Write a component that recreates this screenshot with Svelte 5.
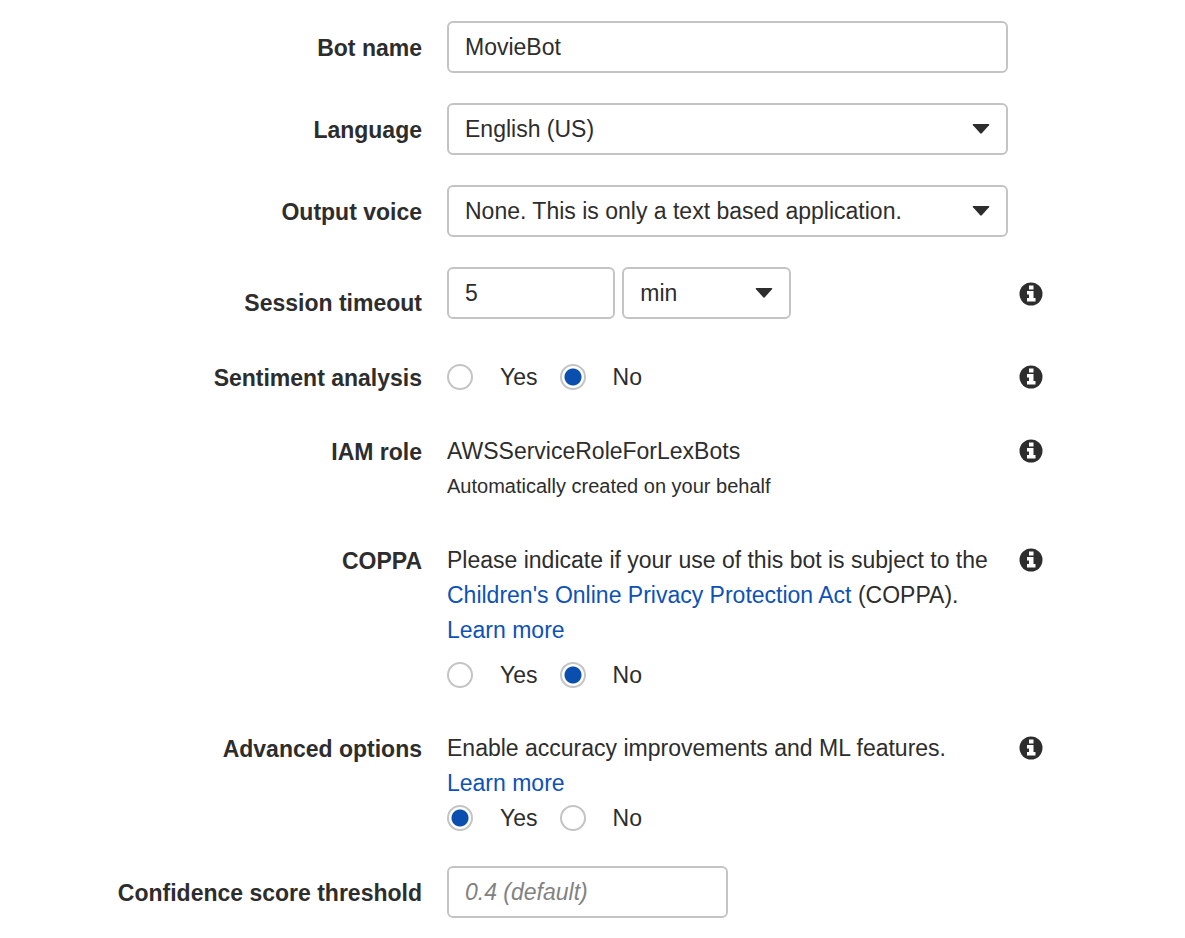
<script>
  let botName = $state('MovieBot')
  let language = $state('en-US')
  let voice = $state('none')
  let timeout = $state(5)
  let unit = $state('min')
  let sentiment = $state('No')
  let coppa = $state('No')
  let advanced = $state('Yes')
  let threshold = $state('')
</script>

{#snippet info(label)}
  <button type="button" class="info" aria-label={label}>
    <svg viewBox="0 0 24 24" width="24" height="24" aria-hidden="true">
      <circle cx="12" cy="12" r="11.5" fill="#2d2d2d" />
      <path d="M10 3.500h4.500v4H10zM8 9h6.500v7h2v3.500H8V16h2v-3.500H8z" fill="#fff" />
    </svg>
  </button>
{/snippet}

{#snippet caret()}
  <svg class="caret" viewBox="0 0 18 10" width="18" height="10" aria-hidden="true">
    <path d="M1.500 0h15q1.500 0 .5 1.200L9.800 9.300q-.8.700-1.600 0L1 1.200Q0 0 1.500 0z" fill="#2d2d2d" />
  </svg>
{/snippet}

<form onsubmit={e => e.preventDefault()}>
  <div class="row">
    <label class="name" for="bot-name">Bot name</label>
    <div class="field"><input id="bot-name" class="box" type="text" bind:value={botName} /></div>
  </div>

  <div class="row">
    <label class="name" for="language">Language</label>
    <div class="field select">
      <select id="language" class="box" bind:value={language}>
        <option value="en-US">English (US)</option>
      </select>
      {@render caret()}
    </div>
  </div>

  <div class="row">
    <label class="name" for="voice">Output voice</label>
    <div class="field select">
      <select id="voice" class="box" bind:value={voice}>
        <option value="none">None. This is only a text based application.</option>
      </select>
      {@render caret()}
    </div>
  </div>

  <div class="row session">
    <label class="name" for="timeout">Session timeout</label>
    <div class="field timeout">
      <input id="timeout" class="box" type="text" inputmode="numeric" bind:value={timeout} />
      <div class="select">
        <select class="box" aria-label="Session timeout unit" bind:value={unit}>
          <option value="min">min</option>
        </select>
        {@render caret()}
      </div>
    </div>
    {@render info('About session timeout')}
  </div>

  <div class="row text sentiment" role="radiogroup" aria-labelledby="sentiment-label">
    <span class="name" id="sentiment-label">Sentiment analysis</span>
    <div class="field choices">
      <label><input type="radio" name="sentiment" value="Yes" bind:group={sentiment} />Yes</label>
      <label><input type="radio" name="sentiment" value="No" bind:group={sentiment} />No</label>
    </div>
    {@render info('About sentiment analysis')}
  </div>

  <div class="row text role">
    <span class="name">IAM role</span>
    <div class="field">
      <div>AWSServiceRoleForLexBots</div>
      <div class="note">Automatically created on your behalf</div>
    </div>
    {@render info('About the IAM role')}
  </div>

  <div class="row text coppa" role="radiogroup" aria-labelledby="coppa-label">
    <span class="name" id="coppa-label">COPPA</span>
    <div class="field">
      <div>
        Please indicate if your use of this bot is subject to the
        <a href="#coppa">Children's Online Privacy Protection Act</a> (COPPA).
      </div>
      <a href="#learn-coppa">Learn more</a>
      <div class="choices">
        <label><input type="radio" name="coppa" value="Yes" bind:group={coppa} />Yes</label>
        <label><input type="radio" name="coppa" value="No" bind:group={coppa} />No</label>
      </div>
    </div>
    {@render info('About COPPA')}
  </div>

  <div class="row text" role="radiogroup" aria-labelledby="advanced-label">
    <span class="name" id="advanced-label">Advanced options</span>
    <div class="field">
      <div>Enable accuracy improvements and ML features.</div>
      <a href="#learn-advanced">Learn more</a>
      <div class="choices">
        <label><input type="radio" name="advanced" value="Yes" bind:group={advanced} />Yes</label>
        <label><input type="radio" name="advanced" value="No" bind:group={advanced} />No</label>
      </div>
    </div>
    {@render info('About advanced options')}
  </div>

  <div class="row">
    <label class="name" for="threshold">Confidence score threshold</label>
    <div class="field">
      <input id="threshold" class="box half" type="text" placeholder="0.4 (default)" bind:value={threshold} />
    </div>
  </div>
</form>

<style>
  :global(body) { background: #fff; }
  form {
    box-sizing: border-box; max-width: 1185px; padding: 21px 142px 0 100px;
    color: #2d2d2d; font: 23px/35px "Liberation Sans", Arial, sans-serif;
  }
  .row {
    display: grid; grid-template-columns: 322px minmax(0, 1fr) 24px;
    column-gap: 11px; margin-bottom: 30px;
  }
  .row:last-child { margin-bottom: 0; padding-bottom: 20px; }
  .name { padding-top: 10px; font-weight: 700; text-align: right; }
  .field { min-width: 0; margin-left: 14px; }
  .box {
    box-sizing: border-box; display: block; width: 100%; height: 52px; padding: 0 16px;
    border: 2px solid #c4c4c4; border-radius: 6px; background: #fff;
    color: #2d2d2d; font: inherit; appearance: none; outline: none;
  }
  .box:focus { border-color: #0a4fae; }
  .box::placeholder { color: #828282; font-style: italic; opacity: 1; }
  .half { width: 50%; }
  .select { position: relative; }
  .caret { position: absolute; right: 18px; top: 21px; pointer-events: none; }
  .timeout { display: grid; grid-template-columns: 30% 30%; column-gap: 7px; }
  .info {
    width: 24px; height: 24px; margin-top: 5px; padding: 0;
    border: 0; background: none; cursor: pointer;
  }
  .info svg { display: block; }
  .session .name { padding-top: 19px; }
  .session .info { margin-top: 15px; }
  .text .name { padding-top: 1px; }
  .session, .role { margin-bottom: 39px; }
  .sentiment, .coppa { margin-bottom: 38px; }
  .note { font-size: 20px; }
  a { color: #0d52b8; text-decoration: none; }
  a:hover { text-decoration: underline; }
  .choices { display: flex; align-items: flex-start; gap: 22px; padding-bottom: 1px; line-height: 34px; }
  .choices label { display: flex; align-items: center; gap: 27px; }
  .coppa .choices { margin-top: 10px; }
  input[type="radio"] {
    appearance: none; box-sizing: border-box; width: 26px; height: 26px; margin: 0;
    border: 2px solid #c4c4c4; border-radius: 50%; background: #fff;
  }
  input[type="radio"]:checked { background: radial-gradient(circle, #0a4fae 8px, #fff 9px); }
</style>
